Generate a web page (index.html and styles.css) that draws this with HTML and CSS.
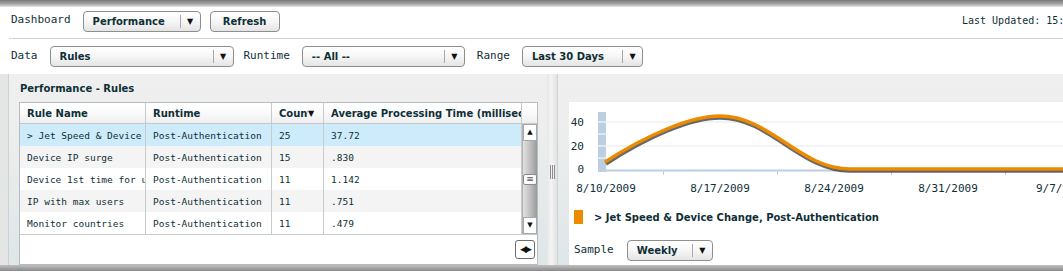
FILE: index.html
```
<!DOCTYPE html>
<html lang="en">

<head>
    <meta charset="UTF-8">
    <title>Performance Dashboard</title>
    <link rel="stylesheet" href="styles.css">
</head>

<body>
    <div class="topbar"></div>

    <div class="toolbar first">
        <span class="label">Dashboard</span>
        <div class="select w-perf"><span class="val">Performance</span><span class="arrow">&#9660;</span></div>
        <div class="btn">Refresh</div>
        <span class="updated">Last Updated: 15:42:07</span>
    </div>

    <div class="toolbar second">
        <span class="label">Data</span>
        <div class="select w-data"><span class="val">Rules</span><span class="arrow">&#9660;</span></div>
        <span class="label">Runtime</span>
        <div class="select w-runtime"><span class="val">-- All --</span><span class="arrow">&#9660;</span></div>
        <span class="label">Range</span>
        <div class="select w-range"><span class="val">Last 30 Days</span><span class="arrow">&#9660;</span></div>
    </div>

    <div class="workspace">
        <div class="left-panel">
            <div class="panel-title">Performance - Rules</div>
            <div class="grid">
                <div class="grid-head">
                    <div class="cell c1">Rule Name</div>
                    <div class="cell c2">Runtime</div>
                    <div class="cell c3"><span class="clip">Count</span><span class="sort">&#9660;</span></div>
                    <div class="cell c4">Average Processing Time (milliseconds)</div>
                    <div class="cell c5"></div>
                </div>
                <div class="grid-body">
                    <div class="rows">
                        <div class="row selected">
                            <div class="cell c1">&gt; Jet Speed &amp; Device Change</div>
                            <div class="cell c2">Post-Authentication</div>
                            <div class="cell c3">25</div>
                            <div class="cell c4">37.72</div>
                        </div>
                        <div class="row alt">
                            <div class="cell c1">Device IP surge</div>
                            <div class="cell c2">Post-Authentication</div>
                            <div class="cell c3">15</div>
                            <div class="cell c4">.830</div>
                        </div>
                        <div class="row">
                            <div class="cell c1">Device 1st time for user</div>
                            <div class="cell c2">Post-Authentication</div>
                            <div class="cell c3">11</div>
                            <div class="cell c4">1.142</div>
                        </div>
                        <div class="row alt">
                            <div class="cell c1">IP with max users</div>
                            <div class="cell c2">Post-Authentication</div>
                            <div class="cell c3">11</div>
                            <div class="cell c4">.751</div>
                        </div>
                        <div class="row">
                            <div class="cell c1">Monitor countries</div>
                            <div class="cell c2">Post-Authentication</div>
                            <div class="cell c3">11</div>
                            <div class="cell c4">.479</div>
                        </div>
                    </div>
                    <div class="vscroll">
                        <div class="sbtn">&#9650;</div>
                        <div class="track"><div class="grip">&#8801;</div></div>
                        <div class="sbtn">&#9660;</div>
                    </div>
                </div>
                <div class="grid-foot">
                    <div class="hbtn">&#9664;&#9654;</div>
                </div>
            </div>
        </div>

        <div class="splitter"><div class="grip-lines"></div></div>

        <div class="right-panel">
            <div class="chart-box">
                <svg class="chart" width="494" height="95" viewBox="0 0 494 95">
                    <line x1="37" y1="20" x2="494" y2="20" stroke="#e6e8ea" stroke-width="1"/>
                    <line x1="37" y1="44" x2="494" y2="44" stroke="#e6e8ea" stroke-width="1"/>
                    <rect x="29" y="10" width="8" height="60" fill="#bccfe0"/>
                    <line x1="29" y1="20" x2="37" y2="20" stroke="#fff"/>
                    <line x1="29" y1="32" x2="37" y2="32" stroke="#fff"/>
                    <line x1="29" y1="44" x2="37" y2="44" stroke="#fff"/>
                    <line x1="29" y1="56" x2="37" y2="56" stroke="#fff"/>
                    <line x1="29" y1="68.5" x2="494" y2="68.5" stroke="#bccfe0" stroke-width="2"/>
                    <g stroke="#bccfe0" stroke-width="1">
                        <line x1="94.5" y1="69" x2="94.5" y2="73"/>
                        <line x1="208.5" y1="69" x2="208.5" y2="73"/>
                        <line x1="322.5" y1="69" x2="322.5" y2="73"/>
                        <line x1="436.5" y1="69" x2="436.5" y2="73"/>
                    </g>
                    <g class="ylab">
                        <text x="15" y="24" text-anchor="end">40</text>
                        <text x="15" y="48" text-anchor="end">20</text>
                        <text x="15" y="71" text-anchor="end">0</text>
                    </g>
                    <path d="M37,62 C77,36 121,16 151,16 C201,16 231,69 281,69 L494,69" fill="none" stroke="#2a2a2a" stroke-width="3.5" opacity="0.7"/>
                    <path d="M36,60 C76,34 121,14 151,14 C201,14 231,67 281,67 L494,67" fill="none" stroke="#ec8a00" stroke-width="3.5"/>
                    <g class="xlab">
                        <text x="37" y="90" text-anchor="middle">8/10/2009</text>
                        <text x="151" y="90" text-anchor="middle">8/17/2009</text>
                        <text x="265" y="90" text-anchor="middle">8/24/2009</text>
                        <text x="379" y="90" text-anchor="middle">8/31/2009</text>
                        <text x="467" y="90">9/7/2009</text>
                    </g>
                </svg>
                <div class="legend">
                    <span class="swatch"></span>
                    <span class="legend-text">&gt; Jet Speed &amp; Device Change, Post-Authentication</span>
                </div>
                <div class="sample">
                    <span class="label">Sample</span>
                    <div class="select w-sample"><span class="val">Weekly</span><span class="arrow">&#9660;</span></div>
                </div>
            </div>
        </div>
    </div>
    <div class="bottombar"></div>
</body>

</html>
```

FILE: styles.css
```
body {
    margin: 0;
    width: 1063px;
    height: 272px;
    overflow: hidden;
    background: #fff;
    color: #0f2f37;
    font-family: "DejaVu Sans", Verdana, sans-serif;
    font-size: 10px;
}

.topbar {
    height: 7px;
    background: linear-gradient(#7a7a7a, #a8a8a8 60%, #e8e8e8);
}

.toolbar {
    display: flex;
    align-items: center;
    padding-left: 11px;
}

.toolbar.first {
    height: 32px;
    margin-left: 9px;
    padding-left: 2px;
    border-bottom: 1px solid #d2d2d2;
    align-items: flex-start;
    box-sizing: border-box;
}

.toolbar.first > * {
    margin-top: 4px;
}

.toolbar.second {
    height: 35px;
}

.label {
    font-family: "DejaVu Sans Mono", monospace;
    font-size: 11px;
    margin-right: 12px;
    position: relative;
    top: -1px;
}

.toolbar.first .label {
    top: 0;
    margin-top: 6px;
}

.second .select {
    margin-right: 11px;
}

.second .w-data {
    margin-right: 10px;
}

.second .w-runtime {
    margin-right: 12px;
}

.select, .btn {
    display: flex;
    align-items: center;
    height: 21px;
    box-sizing: border-box;
    border: 1px solid #8e8e8e;
    border-radius: 4px;
    background: linear-gradient(#ffffff, #f6f6f6 50%, #e4e4e4);
    font-weight: bold;
    font-size: 10px;
}

.select .val {
    flex: 1;
    padding-left: 9px;
}

.select .arrow {
    width: 19px;
    height: 13px;
    line-height: 13px;
    border-left: 1px solid #a8a8a8;
    text-align: center;
    font-size: 8px;
    color: #111;
}

.w-perf { width: 118px; margin-right: 9px; }
.w-data { width: 184px; }
.w-runtime { width: 163px; }
.w-range { width: 121px; }
.w-sample { width: 86px; }

.btn {
    width: 70px;
    justify-content: center;
}

.updated {
    margin-left: auto;
    width: 101px;
    overflow: hidden;
    white-space: nowrap;
    font-family: "DejaVu Sans Mono", monospace;
    font-size: 10px;
    padding-top: 4px;
}

.workspace {
    display: flex;
    height: 191px;
    background: #e4e6e6;
}

.left-panel {
    margin-left: 8px;
    width: 539px;
    box-sizing: border-box;
    border-left: 1px solid #d0d0d0;
    padding-left: 10px;
    background: linear-gradient(#efefef, #eeeeee 25%, #dee6e8);
}

.panel-title {
    height: 28px;
    line-height: 29px;
    font-weight: bold;
    padding-left: 1px;
}

.grid {
    width: 519px;
    height: 163px;
    box-sizing: border-box;
    border: 1px solid #b6bcbf;
    background: #fff;
    display: flex;
    flex-direction: column;
}

.grid-head {
    display: flex;
    height: 20px;
    background: linear-gradient(#ffffff, #fafafa 50%, #efefef);
    border-bottom: 1px solid #c4c8ca;
    font-weight: bold;
}

.grid-head .cell {
    line-height: 21px;
}

.cell {
    box-sizing: border-box;
    padding-left: 7px;
    white-space: nowrap;
    overflow: hidden;
    border-right: 1px solid #c8cbcc;
}

.c1 { width: 126px; }
.c2 { width: 126px; }
.c3 { width: 52px; }
.c4 { width: 198px; }
.c5 { width: 15px; border-right: 0; }

.grid-head .c3 {
    display: flex;
    padding-right: 2px;
}

.grid-head .c3 .clip {
    width: 29px;
    overflow: hidden;
}

.grid-head .c3 .sort {
    font-size: 8px;
    color: #111;
}

.grid-body {
    display: flex;
    height: 110px;
}

.rows {
    width: 502px;
}

.row {
    display: flex;
    height: 22px;
    line-height: 23px;
    font-family: "DejaVu Sans Mono", monospace;
    font-size: 9.5px;
}

.row .cell {
    padding-left: 7px;
}

.row.selected { background: #cdebfa; }
.row.alt { background: #f4f4f4; }

.vscroll {
    width: 16px;
    display: flex;
    flex-direction: column;
    border-left: 1px solid #b0b0b0;
}

.sbtn {
    height: 15px;
    line-height: 15px;
    text-align: center;
    font-size: 7px;
    background: #fdfdfd;
    border: 1px solid #a9a9a9;
    color: #111;
}

.track {
    flex: 1;
    background: linear-gradient(90deg, #e2e2e2, #b9b9b9 60%, #9a9a9a);
    display: flex;
    align-items: center;
    justify-content: center;
}

.grip {
    width: 12px;
    height: 9px;
    line-height: 9px;
    font-size: 9px;
    text-align: center;
    background: #fbfbfb;
    border: 1px solid #8a8a8a;
    border-radius: 2px;
    color: #555;
}

.grid-foot {
    flex: 1;
    display: flex;
    justify-content: flex-end;
    align-items: center;
    padding-right: 2px;
    border-top: 1px solid #c8cbcc;
}

.hbtn {
    width: 18px;
    height: 17px;
    line-height: 17px;
    font-size: 9px;
    text-align: center;
    border: 1px solid #6e6e6e;
    border-radius: 3px;
    background: #fff;
    letter-spacing: -2px;
    color: #111;
}

.splitter {
    width: 10px;
    display: flex;
    align-items: center;
    justify-content: center;
    background: linear-gradient(90deg, #e6e6e6, #f4f4f4 40%, #e2e2e2);
    border-right: 1px solid #cfd4d6;
}

.grip-lines {
    width: 5px;
    height: 14px;
    margin-top: 4px;
    background: repeating-linear-gradient(90deg, #8e8e8e 0 1px, transparent 1px 2px);
}

.right-panel {
    flex: 1;
    padding-top: 28px;
    padding-left: 11px;
    background: linear-gradient(#efefef, #eeeeee 25%, #dee6e8);
}

.chart-box {
    height: 163px;
    background: #fff;
}

.chart {
    display: block;
}

.chart text {
    font-family: "DejaVu Sans Mono", monospace;
    font-size: 11px;
    fill: #0f2f37;
}

.legend {
    display: flex;
    align-items: center;
    margin-top: 13px;
    padding-left: 5px;
    height: 14px;
}

.swatch {
    width: 9px;
    height: 14px;
    background: #ec8a00;
    margin-right: 11px;
}

.legend-text {
    font-weight: bold;
}

.sample {
    display: flex;
    align-items: center;
    margin-top: 16px;
    padding-left: 5px;
}

.sample .label {
    margin-right: 13px;
}

.bottombar {
    height: 6px;
    background: linear-gradient(#c0c0c0, #8a8a8a);
}
```
